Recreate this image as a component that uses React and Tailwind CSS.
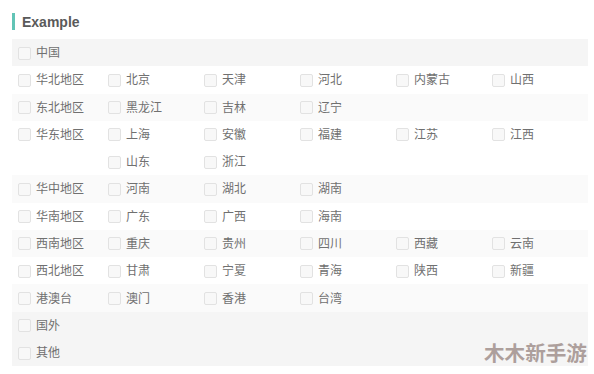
const regions = [
    { name: '华北地区', items: [['北京', '天津', '河北', '内蒙古', '山西']] },
    { name: '东北地区', items: [['黑龙江', '吉林', '辽宁']] },
    { name: '华东地区', items: [['上海', '安徽', '福建', '江苏', '江西'], ['山东', '浙江']] },
    { name: '华中地区', items: [['河南', '湖北', '湖南']] },
    { name: '华南地区', items: [['广东', '广西', '海南']] },
    { name: '西南地区', items: [['重庆', '贵州', '四川', '西藏', '云南']] },
    { name: '西北地区', items: [['甘肃', '宁夏', '青海', '陕西', '新疆']] },
    { name: '港澳台', items: [['澳门', '香港', '台湾']] },
]

const Check = ({ label, className = '' }) => (
    <label className={`flex items-center gap-[5px] h-[27.27px] pt-px ${className}`}>
        <span className="w-[13px] h-[13px] rounded-[2px] border border-[#e2e2e2] bg-[#f8f8f8] shrink-0" />
        <span className="text-[12px] text-[#707070] leading-none">{label}</span>
    </label>
)

const App = () => {
    return (
        <div
            className="relative w-[594px] h-[374px] bg-white pt-[13px] px-[12px] overflow-hidden"
            style={{ fontFamily: '"Noto Sans", "Noto Sans CJK SC", sans-serif' }}
        >
            {/* Title */}
            <div className="flex items-center h-[17px] mb-[9px]">
                <span className="w-[3px] h-[17px] bg-[#62c4b6]" />
                <span
                    className="ml-[7px] text-[14px] font-bold text-[#5a5a5a] leading-none"
                    style={{ fontFamily: '"Liberation Sans", sans-serif' }}
                >
                    Example
                </span>
            </div>

            <div className="w-[576px]">
                {/* Top level: 中国 */}
                <div className="bg-[#f5f5f5] px-[6px]">
                    <Check label="中国" />
                </div>

                {/* Region rows */}
                {regions.map((region, i) => (
                    <div
                        key={region.name}
                        className={`flex px-[6px] ${i % 2 === 1 ? 'bg-[#fafafa]' : 'bg-white'}`}
                    >
                        <div className="w-[90px] shrink-0">
                            <Check label={region.name} />
                        </div>
                        <div className="flex flex-col">
                            {region.items.map((line, j) => (
                                <div key={j} className="flex">
                                    {line.map((p) => (
                                        <Check key={p} label={p} className="w-[96px]" />
                                    ))}
                                </div>
                            ))}
                        </div>
                    </div>
                ))}

                {/* Other top level */}
                <div className="bg-[#f5f5f5] px-[6px]">
                    <Check label="国外" />
                    <Check label="其他" />
                </div>
            </div>

            {/* Watermark */}
            <div className="absolute left-[484px] top-[343px] text-[20.6px] font-bold text-[#ad9f9c] leading-none">
                木木新手游
            </div>
        </div>
    )
}

export default App
